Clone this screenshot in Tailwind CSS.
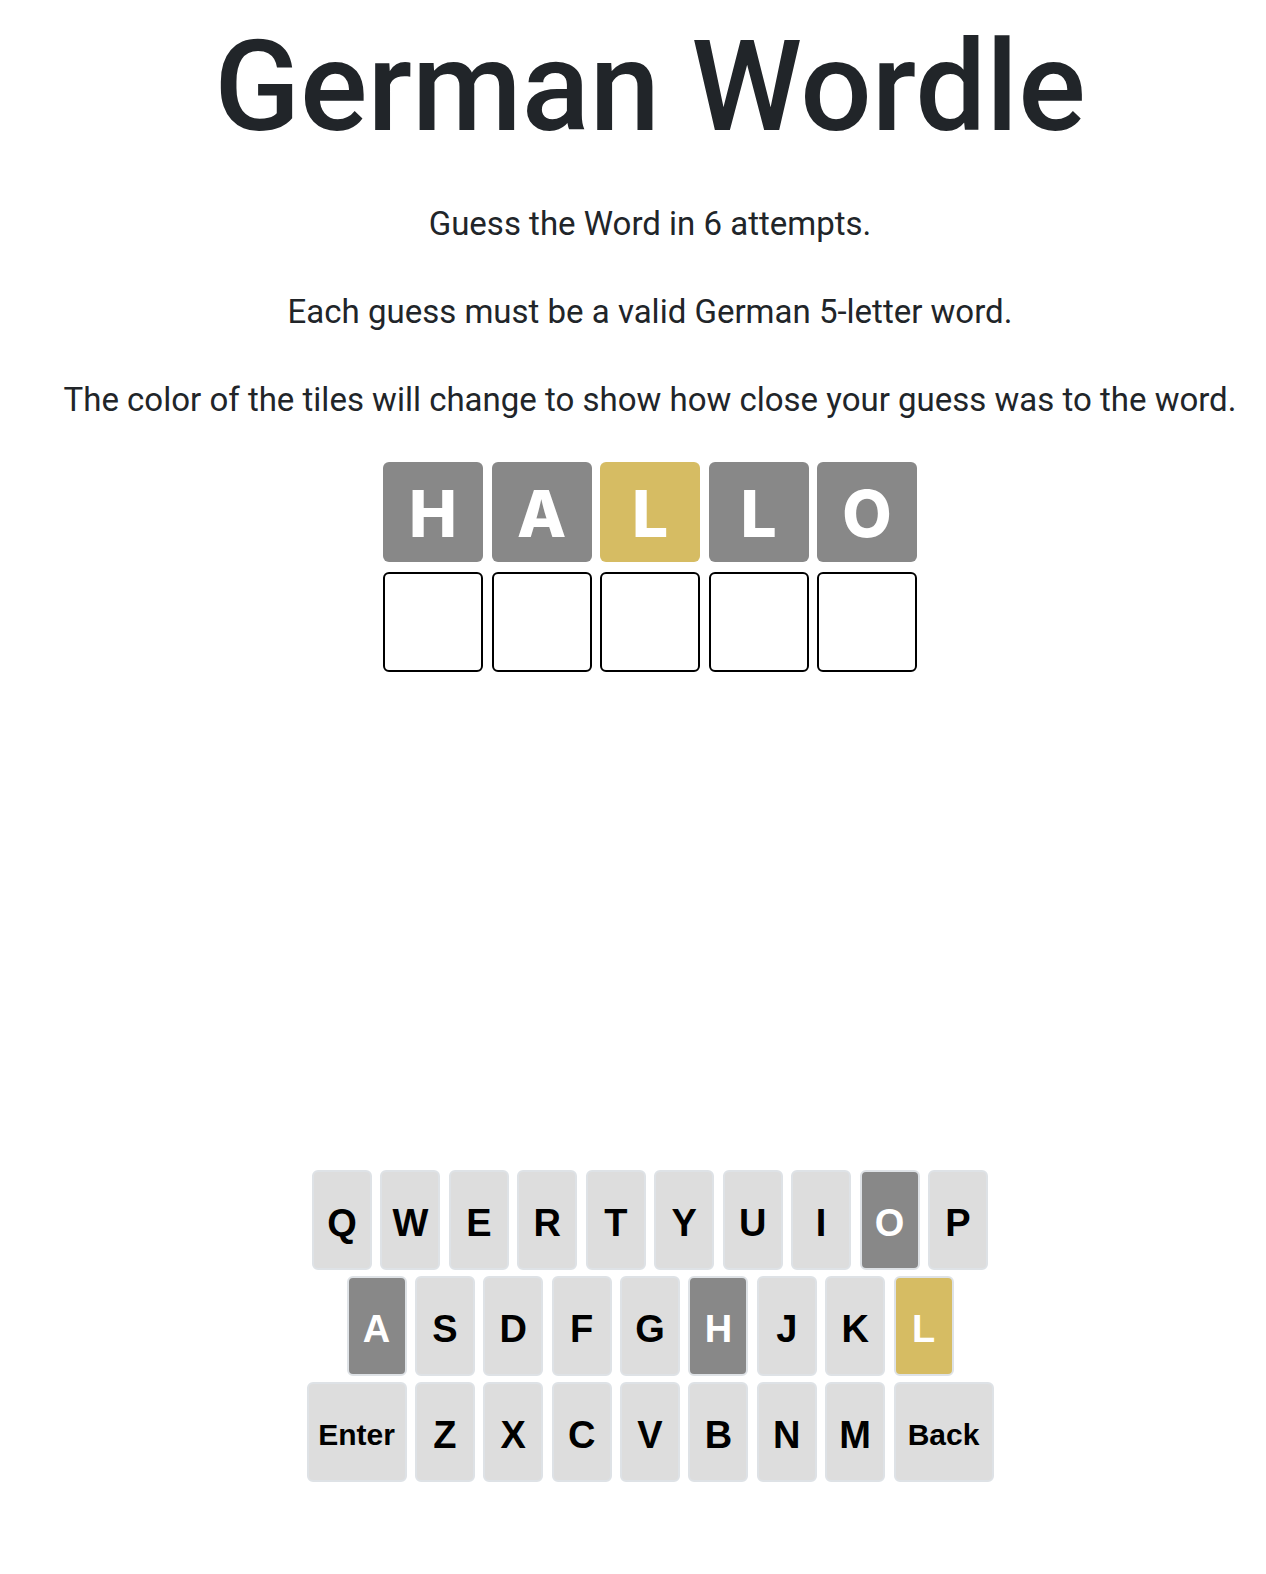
<!DOCTYPE html>
<html lang="en">
<head>
<meta charset="utf-8">
<meta name="viewport" content="width=device-width, initial-scale=1">
<title>German Wordle</title>
<script src="https://cdn.jsdelivr.net/npm/@tailwindcss/browser@4"></script>
</head>
<body class="bg-white text-[#212529] font-[Inter,sans-serif]">
<main class="flex min-h-screen flex-col items-center pt-3 pb-23 pl-[34px]">
  <h1 class="text-center font-[Roboto,sans-serif] text-[126px] leading-[150px] font-medium whitespace-nowrap">German Wordle</h1>
  <div class="mt-[38px] flex flex-col gap-10 text-center font-[Roboto,sans-serif] text-[33px] leading-12 whitespace-nowrap">
    <p>Guess the Word in 6 attempts.</p>
    <p>Each guess must be a valid German 5-letter word.</p>
    <p>The color of the tiles will change to show how close your guess was to the word.</p>
  </div>
  <section aria-label="Guesses" class="mt-[38px] flex w-[534px] flex-col gap-[10px] text-[64px] leading-none font-extrabold text-white">
    <div class="flex justify-between">
      <div class="flex size-[100px] items-center justify-center rounded-md bg-[#888888] pt-1">H</div>
      <div class="flex size-[100px] items-center justify-center rounded-md bg-[#888888] pt-1">A</div>
      <div class="flex size-[100px] items-center justify-center rounded-md bg-[#d6bc63] pt-1">L</div>
      <div class="flex size-[100px] items-center justify-center rounded-md bg-[#888888] pt-1">L</div>
      <div class="flex size-[100px] items-center justify-center rounded-md bg-[#888888] pt-1">O</div>
    </div>
    <div class="flex justify-between">
      <div class="size-[100px] rounded-md border-2 border-black"></div>
      <div class="size-[100px] rounded-md border-2 border-black"></div>
      <div class="size-[100px] rounded-md border-2 border-black"></div>
      <div class="size-[100px] rounded-md border-2 border-black"></div>
      <div class="size-[100px] rounded-md border-2 border-black"></div>
    </div>
  </section>
  <section aria-label="Keyboard" class="mt-auto flex flex-col items-center gap-[6px] font-['Liberation_Sans',sans-serif] text-[38px] leading-none font-bold text-black">
    <div class="flex w-[676px] justify-between">
      <button class="h-[100px] w-[60px] rounded-md border-2 border-[#dee2e6] bg-[#dddddd] pt-[6px]">Q</button>
      <button class="h-[100px] w-[60px] rounded-md border-2 border-[#dee2e6] bg-[#dddddd] pt-[6px]">W</button>
      <button class="h-[100px] w-[60px] rounded-md border-2 border-[#dee2e6] bg-[#dddddd] pt-[6px]">E</button>
      <button class="h-[100px] w-[60px] rounded-md border-2 border-[#dee2e6] bg-[#dddddd] pt-[6px]">R</button>
      <button class="h-[100px] w-[60px] rounded-md border-2 border-[#dee2e6] bg-[#dddddd] pt-[6px]">T</button>
      <button class="h-[100px] w-[60px] rounded-md border-2 border-[#dee2e6] bg-[#dddddd] pt-[6px]">Y</button>
      <button class="h-[100px] w-[60px] rounded-md border-2 border-[#dee2e6] bg-[#dddddd] pt-[6px]">U</button>
      <button class="h-[100px] w-[60px] rounded-md border-2 border-[#dee2e6] bg-[#dddddd] pt-[6px]">I</button>
      <button class="h-[100px] w-[60px] rounded-md border-2 border-[#dee2e6] bg-[#888888] pt-[6px] text-white">O</button>
      <button class="h-[100px] w-[60px] rounded-md border-2 border-[#dee2e6] bg-[#dddddd] pt-[6px]">P</button>
    </div>
    <div class="flex w-[607px] justify-between">
      <button class="h-[100px] w-[60px] rounded-md border-2 border-[#dee2e6] bg-[#888888] pt-[6px] text-white">A</button>
      <button class="h-[100px] w-[60px] rounded-md border-2 border-[#dee2e6] bg-[#dddddd] pt-[6px]">S</button>
      <button class="h-[100px] w-[60px] rounded-md border-2 border-[#dee2e6] bg-[#dddddd] pt-[6px]">D</button>
      <button class="h-[100px] w-[60px] rounded-md border-2 border-[#dee2e6] bg-[#dddddd] pt-[6px]">F</button>
      <button class="h-[100px] w-[60px] rounded-md border-2 border-[#dee2e6] bg-[#dddddd] pt-[6px]">G</button>
      <button class="h-[100px] w-[60px] rounded-md border-2 border-[#dee2e6] bg-[#888888] pt-[6px] text-white">H</button>
      <button class="h-[100px] w-[60px] rounded-md border-2 border-[#dee2e6] bg-[#dddddd] pt-[6px]">J</button>
      <button class="h-[100px] w-[60px] rounded-md border-2 border-[#dee2e6] bg-[#dddddd] pt-[6px]">K</button>
      <button class="h-[100px] w-[60px] rounded-md border-2 border-[#dee2e6] bg-[#d6bc63] pt-[6px] text-white">L</button>
    </div>
    <div class="flex w-[687px] justify-between">
      <button class="h-[100px] w-[100px] rounded-md border-2 border-[#dee2e6] bg-[#dddddd] pt-[6px] text-[30px]">Enter</button>
      <button class="h-[100px] w-[60px] rounded-md border-2 border-[#dee2e6] bg-[#dddddd] pt-[6px]">Z</button>
      <button class="h-[100px] w-[60px] rounded-md border-2 border-[#dee2e6] bg-[#dddddd] pt-[6px]">X</button>
      <button class="h-[100px] w-[60px] rounded-md border-2 border-[#dee2e6] bg-[#dddddd] pt-[6px]">C</button>
      <button class="h-[100px] w-[60px] rounded-md border-2 border-[#dee2e6] bg-[#dddddd] pt-[6px]">V</button>
      <button class="h-[100px] w-[60px] rounded-md border-2 border-[#dee2e6] bg-[#dddddd] pt-[6px]">B</button>
      <button class="h-[100px] w-[60px] rounded-md border-2 border-[#dee2e6] bg-[#dddddd] pt-[6px]">N</button>
      <button class="h-[100px] w-[60px] rounded-md border-2 border-[#dee2e6] bg-[#dddddd] pt-[6px]">M</button>
      <button class="h-[100px] w-[100px] rounded-md border-2 border-[#dee2e6] bg-[#dddddd] pt-[6px] text-[30px]">Back</button>
    </div>
  </section>
</main>
</body>
</html>
